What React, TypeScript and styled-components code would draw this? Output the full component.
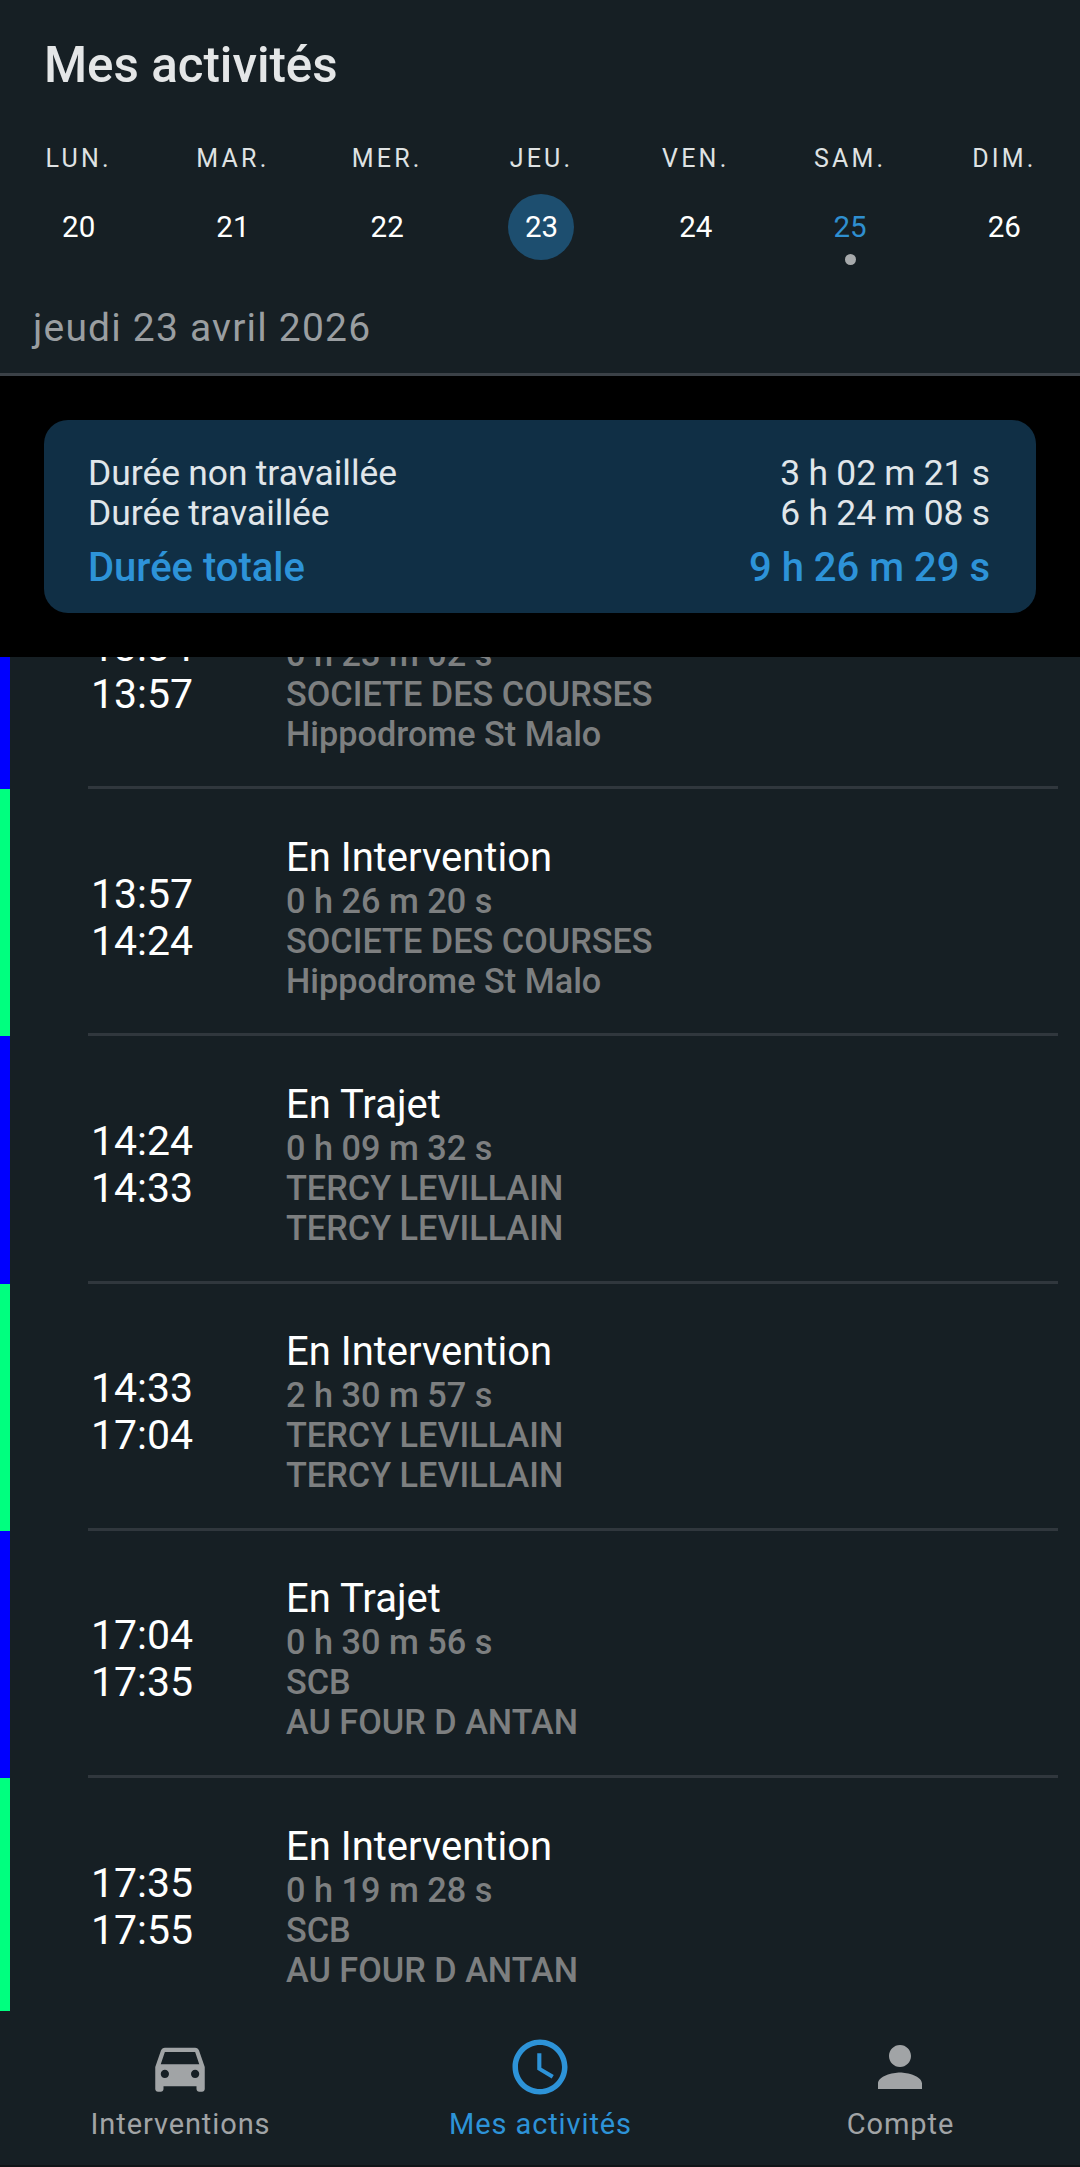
import * as React from "react";
import styled, { createGlobalStyle } from "styled-components";

const GlobalStyle = createGlobalStyle`
html, body {
    margin: 0;
    padding: 0;
    background: #000;
}
* {
    box-sizing: border-box;
}
`

const days = [
    { label: "LUN.", num: 20 },
    { label: "MAR.", num: 21 },
    { label: "MER.", num: 22 },
    { label: "JEU.", num: 23, selected: true },
    { label: "VEN.", num: 24 },
    { label: "SAM.", num: 25, today: true },
    { label: "DIM.", num: 26 },
]

const activities = [
    { start: "13:34", end: "13:57", title: "En Trajet", duration: "0 h 23 m 02 s", client: "SOCIETE DES COURSES", place: "Hippodrome St Malo", color: "#0000ff" },
    { start: "13:57", end: "14:24", title: "En Intervention", duration: "0 h 26 m 20 s", client: "SOCIETE DES COURSES", place: "Hippodrome St Malo", color: "#00ff7f" },
    { start: "14:24", end: "14:33", title: "En Trajet", duration: "0 h 09 m 32 s", client: "TERCY LEVILLAIN", place: "TERCY LEVILLAIN", color: "#0000ff" },
    { start: "14:33", end: "17:04", title: "En Intervention", duration: "2 h 30 m 57 s", client: "TERCY LEVILLAIN", place: "TERCY LEVILLAIN", color: "#00ff7f" },
    { start: "17:04", end: "17:35", title: "En Trajet", duration: "0 h 30 m 56 s", client: "SCB", place: "AU FOUR D ANTAN", color: "#0000ff" },
    { start: "17:35", end: "17:55", title: "En Intervention", duration: "0 h 19 m 28 s", client: "SCB", place: "AU FOUR D ANTAN", color: "#00ff7f" },
]

const CarIcon = () => (
    <NavSvg viewBox="0 0 24 24">
        <path d="M18.92 6.01C18.72 5.42 18.16 5 17.5 5h-11c-.66 0-1.21.42-1.42 1.01L3 12v8c0 .55.45 1 1 1h1c.55 0 1-.45 1-1v-1h12v1c0 .55.45 1 1 1h1c.55 0 1-.45 1-1v-8l-2.08-5.99zM6.5 16c-.83 0-1.5-.67-1.5-1.5S5.67 13 6.5 13s1.5.67 1.5 1.5S7.33 16 6.5 16zm11 0c-.83 0-1.5-.67-1.5-1.5s.67-1.5 1.5-1.5 1.5.67 1.5 1.5-.67 1.5-1.5 1.5zM5 11l1.5-4.5h11L19 11H5z" />
    </NavSvg>
)

const ClockIcon = () => (
    <NavSvg viewBox="0 0 24 24">
        <path d="M11.99 2C6.47 2 2 6.48 2 12s4.47 10 9.99 10C17.52 22 22 17.52 22 12S17.52 2 11.99 2zM12 20c-4.42 0-8-3.58-8-8s3.58-8 8-8 8 3.58 8 8-3.58 8-8 8z" />
        <path d="M12.5 7H11v6l5.25 3.15.75-1.23-4.5-2.67z" />
    </NavSvg>
)

const PersonIcon = () => (
    <NavSvg viewBox="0 0 24 24">
        <path d="M12 12c2.21 0 4-1.79 4-4s-1.79-4-4-4-4 1.79-4 4 1.79 4 4 4zm0 2c-2.67 0-8 1.34-8 4v2h16v-2c0-2.66-5.33-4-8-4z" />
    </NavSvg>
)

export default function App() {
    return (
        <Screen>
            <GlobalStyle />
            <Header>
                <Title>Mes activités</Title>
                <WeekGrid>
                    {days.map((d) => (
                        <DayColumn key={d.label}>
                            <DayLabel>{d.label}</DayLabel>
                            <DayNumber $selected={d.selected} $today={d.today}>{d.num}</DayNumber>
                            {d.today && <DayDot />}
                        </DayColumn>
                    ))}
                </WeekGrid>
                <DateLine>jeudi 23 avril 2026</DateLine>
            </Header>

            <SummaryBand>
                <SummaryCard>
                    <SummaryRow><span>Durée non travaillée</span><span>3 h 02 m 21 s</span></SummaryRow>
                    <SummaryRow><span>Durée travaillée</span><span>6 h 24 m 08 s</span></SummaryRow>
                    <SummaryTotal><span>Durée totale</span><span>9 h 26 m 29 s</span></SummaryTotal>
                </SummaryCard>
            </SummaryBand>

            <ListViewport>
                <ListInner>
                    {activities.map((a) => (
                        <Row key={a.start}>
                            <Bar $color={a.color} />
                            <RowBody>
                                <Times>
                                    <span>{a.start}</span>
                                    <span>{a.end}</span>
                                </Times>
                                <Details>
                                    <RowTitle>{a.title}</RowTitle>
                                    <RowLine>{a.duration}</RowLine>
                                    <RowLine>{a.client}</RowLine>
                                    <RowLine>{a.place}</RowLine>
                                </Details>
                            </RowBody>
                        </Row>
                    ))}
                </ListInner>
            </ListViewport>

            <BottomNav>
                <NavItem><CarIcon /><NavLabel>Interventions</NavLabel></NavItem>
                <NavItem $active><ClockIcon /><NavLabel>Mes activités</NavLabel></NavItem>
                <NavItem><PersonIcon /><NavLabel>Compte</NavLabel></NavItem>
            </BottomNav>
        </Screen>
    )
}

const Screen = styled.div`
width: 1080px;
height: 2167px;
display: flex;
flex-direction: column;
overflow: hidden;
background: #161f24;
font-family: Roboto, "Liberation Sans", sans-serif;
`

const Header = styled.header`
height: 376px;
flex: none;
padding-top: 40px;
background: #161f24;
border-bottom: 3px solid #3b4147;
`

const Title = styled.h1`
margin: 0 0 0 44px;
height: 50px;
font-size: 49.3px;
line-height: 50px;
font-weight: 500;
color: #e4e6e7;
`

const WeekGrid = styled.div`
display: grid;
grid-template-columns: repeat(7, 1fr);
width: 1080px;
margin: 54px 0 0 1.5px;
`

const DayColumn = styled.div`
display: flex;
flex-direction: column;
align-items: center;
position: relative;
`

const DayLabel = styled.div`
height: 30px;
font-size: 25px;
line-height: 30px;
letter-spacing: 3.2px;
color: #dfe2e3;
`

const DayNumber = styled.div<{ $selected?: boolean; $today?: boolean }>`
width: 66px;
height: 66px;
margin-top: 20px;
border-radius: 50%;
display: flex;
align-items: center;
justify-content: center;
font-size: 29.5px;
color: ${(p) => (p.$today ? "#2f8fd0" : "#fff")};
background: ${(p) => (p.$selected ? "#1d4e6f" : "transparent")};
`

const DayDot = styled.span`
position: absolute;
top: 110px;
left: 50%;
width: 11px;
height: 11px;
margin-left: -5.5px;
border-radius: 50%;
background: #a7aaac;
`

const DateLine = styled.div`
margin: 46px 0 0 33px;
font-size: 39px;
line-height: 44px;
letter-spacing: 1.2px;
color: #9a9ea1;
`

const SummaryBand = styled.section`
height: 281px;
flex: none;
padding: 44px;
background: #000;
`

const SummaryCard = styled.div`
height: 193px;
padding: 33px 46px 0 44px;
border-radius: 24px;
background: #102f45;
`

const SummaryRow = styled.div`
display: flex;
justify-content: space-between;
font-size: 35.4px;
line-height: 40px;
word-spacing: -0.5px;
color: #e0e6ea;
`

const SummaryTotal = styled(SummaryRow)`
margin-top: 13px;
font-size: 40px;
line-height: 44px;
font-weight: 500;
word-spacing: 0;
color: #2d93d8;
`

const ListViewport = styled.main`
flex: 1;
min-height: 0;
overflow: hidden;
`

const ListInner = styled.div`
margin-top: -115px;
`

const Row = styled.article`
height: 247.2px;
display: flex;
`

const Bar = styled.div<{ $color: string }>`
width: 10px;
flex: none;
background: ${(p) => p.$color};
`

const RowBody = styled.div`
flex: 1;
margin: 0 22px 0 78px;
padding: 13px 0 0 3px;
display: flex;
align-items: center;
border-bottom: 3px solid #30373d;
`

const Times = styled.div`
width: 195px;
flex: none;
display: flex;
flex-direction: column;
font-size: 41px;
line-height: 47px;
color: #fff;
`

const Details = styled.div`
display: flex;
flex-direction: column;
`

const RowTitle = styled.div`
font-size: 40px;
line-height: 46px;
color: #fff;
`

const RowLine = styled.div`
font-size: 34.25px;
line-height: 40px;
font-weight: 500;
color: #7d7f80;
`

const BottomNav = styled.nav`
height: 156px;
flex: none;
display: grid;
grid-template-columns: repeat(3, 1fr);
padding-top: 23px;
background: #161f24;
border-bottom: 2px solid #101417;
`

const NavItem = styled.div<{ $active?: boolean }>`
display: flex;
flex-direction: column;
align-items: center;
color: ${(p) => (p.$active ? "#2d93d8" : "#a1a4a6")};
`

const NavSvg = styled.svg`
width: 66px;
height: 66px;
fill: currentColor;
`

const NavLabel = styled.span`
margin-top: 6px;
padding-left: 1px;
font-size: 29px;
line-height: 36px;
letter-spacing: 0.9px;
`
